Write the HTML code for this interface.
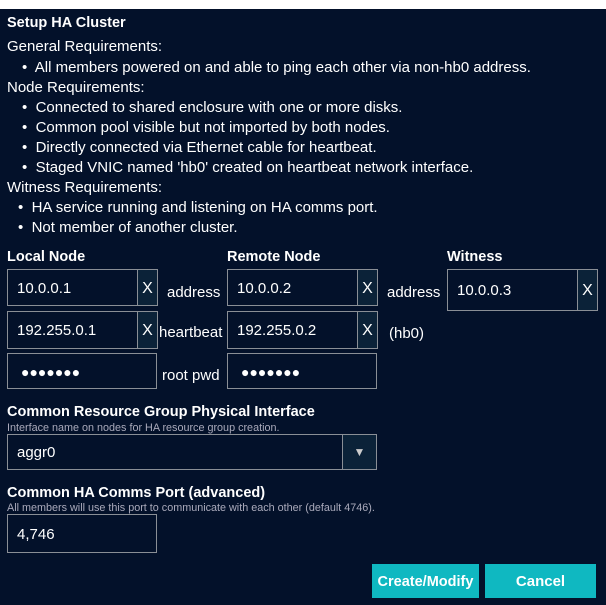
<!DOCTYPE html>
<html><head><style>
*{margin:0;padding:0;box-sizing:border-box}
body{width:606px;height:605px;background:#fff;position:relative;overflow:hidden;font-family:"Liberation Sans",sans-serif;color:#fff}
#bg{position:absolute;left:0;top:9px;width:606px;height:596px;background:#03112a}
.t{position:absolute;font-size:15px;white-space:nowrap;line-height:16px;margin-top:2px}
.b{font-weight:bold;font-size:14.5px}
.s{font-size:10.8px;color:#aab;line-height:12px;margin-top:0}
.box{position:absolute;border:1px solid #8a8f96;background:#03112a;font-size:15px;line-height:16px}
.box span{position:absolute;left:9px;top:50%;margin-top:-7px}
.x{position:absolute;width:21px;background:#0b2238;border:1px solid #8a8f96;text-align:center;font-size:16px}
.btn{position:absolute;background:#0fb8c1;font-weight:bold;font-size:15px;text-align:center;line-height:36px;height:34px}
.pw{font-size:14px;letter-spacing:0}
</style></head><body>
<div id="bg"></div>
<div class="t b" style="left:7px;top:13px">Setup HA Cluster</div>
<div class="t" style="left:7px;top:37px">General Requirements:</div>
<div class="t" style="left:22px;top:58px">•&nbsp; All members powered on and able to ping each other via non-hb0 address.</div>
<div class="t" style="left:7px;top:78px">Node Requirements:</div>
<div class="t" style="left:22px;top:98px">•&nbsp; Connected to shared enclosure with one or more disks.</div>
<div class="t" style="left:22px;top:118px">•&nbsp; Common pool visible but not imported by both nodes.</div>
<div class="t" style="left:22px;top:138px">•&nbsp; Directly connected via Ethernet cable for heartbeat.</div>
<div class="t" style="left:22px;top:158px">•&nbsp; Staged VNIC named 'hb0' created on heartbeat network interface.</div>
<div class="t" style="left:7px;top:178px">Witness Requirements:</div>
<div class="t" style="left:18px;top:198px">•&nbsp; HA service running and listening on HA comms port.</div>
<div class="t" style="left:18px;top:218px">•&nbsp; Not member of another cluster.</div>

<div class="t b" style="left:7px;top:247px">Local Node</div>
<div class="t b" style="left:227px;top:247px">Remote Node</div>
<div class="t b" style="left:447px;top:247px">Witness</div>

<div class="box" style="left:7px;top:269px;width:131px;height:37px"><span>10.0.0.1</span></div>
<div class="x" style="left:137px;top:269px;height:37px;line-height:37px">X</div>
<div class="t" style="left:167px;top:283px">address</div>
<div class="box" style="left:227px;top:269px;width:131px;height:37px"><span>10.0.0.2</span></div>
<div class="x" style="left:357px;top:269px;height:37px;line-height:37px">X</div>
<div class="t" style="left:387px;top:283px">address</div>
<div class="box" style="left:447px;top:269px;width:131px;height:42px"><span>10.0.0.3</span></div>
<div class="x" style="left:577px;top:269px;height:42px;line-height:42px">X</div>

<div class="box" style="left:7px;top:311px;width:131px;height:38px"><span>192.255.0.1</span></div>
<div class="x" style="left:137px;top:311px;height:38px;line-height:38px">X</div>
<div class="t" style="left:159px;top:323px">heartbeat</div>
<div class="box" style="left:227px;top:311px;width:131px;height:38px"><span>192.255.0.2</span></div>
<div class="x" style="left:357px;top:311px;height:38px;line-height:38px">X</div>
<div class="t" style="left:389px;top:324px">(hb0)</div>

<div class="box" style="left:7px;top:353px;width:150px;height:36px"><span class="pw" style="left:13px">●●●●●●●</span></div>
<div class="t" style="left:162px;top:366px">root pwd</div>
<div class="box" style="left:227px;top:353px;width:150px;height:36px"><span class="pw" style="left:13px">●●●●●●●</span></div>

<div class="t b" style="left:7px;top:402px">Common Resource Group Physical Interface</div>
<div class="t s" style="left:7px;top:422px">Interface name on nodes for HA resource group creation.</div>
<div class="box" style="left:7px;top:434px;width:336px;height:36px"><span>aggr0</span></div>
<div class="x" style="left:342px;top:434px;width:35px;height:36px;line-height:34px;font-size:12px;color:#ccc">▼</div>

<div class="t b" style="left:7px;top:483px">Common HA Comms Port (advanced)</div>
<div class="t s" style="left:7px;top:502px">All members will use this port to communicate with each other (default 4746).</div>
<div class="box" style="left:7px;top:514px;width:150px;height:39px"><span>4,746</span></div>

<div class="btn" style="left:372px;top:564px;width:107px;font-size:14.5px">Create/Modify</div>
<div class="btn" style="left:485px;top:564px;width:111px">Cancel</div>
</body></html>
